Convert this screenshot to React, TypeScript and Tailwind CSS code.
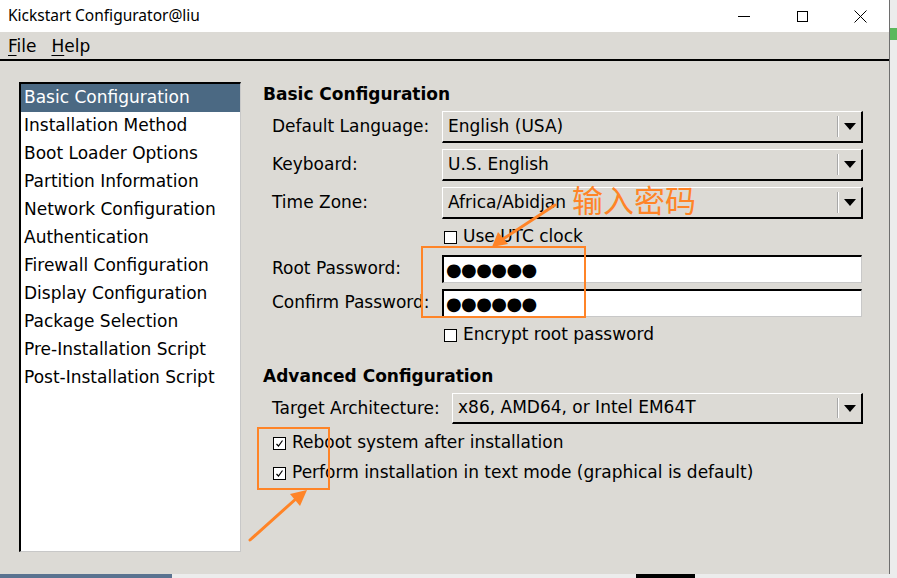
import React from "react";

const F = { fontFamily: '"DejaVu Sans", sans-serif' } as const;

function Combo({ value, w }: { value: string; w: string }) {
  return (
    <div className={`flex h-full items-center border-t border-l border-t-white border-l-white border-b-[2px] border-r-[2px] border-b-black border-r-black bg-[#dcdad5] ${w}`}>
      <span className="flex-1 pl-[5px] text-[17px] text-black">{value}</span>
      <div className="flex h-full items-center py-[4px]">
        <div className="h-full w-px bg-[#a8a8a8]" />
        <div className="h-full w-px bg-white" />
        <div className="flex w-[22px] items-center justify-center">
          <svg width="12" height="7" viewBox="0 0 12 7">
            <polygon points="0,0 12,0 6,7" fill="#000" />
          </svg>
        </div>
      </div>
    </div>
  );
}

function Check({ checked }: { checked?: boolean }) {
  return (
    <div className="flex h-[13px] w-[13px] items-center justify-center border border-black bg-white">
      {checked && (
        <svg width="9" height="9" viewBox="0 0 9 9">
          <polyline points="1.5,5 3.5,7 7.5,1.5" fill="none" stroke="#000" strokeWidth="1.2" />
        </svg>
      )}
    </div>
  );
}

function Entry() {
  return (
    <div className="flex h-full w-[420px] items-center border-t-[2px] border-l-[2px] border-t-black border-l-black border-b border-r border-b-[#c8c8c8] border-r-[#c8c8c8] bg-white pl-[2px]">
      <span className="text-[18px] leading-none tracking-[-0.6px] text-black">●●●●●●</span>
    </div>
  );
}

const items = [
  "Basic Configuration",
  "Installation Method",
  "Boot Loader Options",
  "Partition Information",
  "Network Configuration",
  "Authentication",
  "Firewall Configuration",
  "Display Configuration",
  "Package Selection",
  "Pre-Installation Script",
  "Post-Installation Script",
];

export default function App() {
  return (
    <div className="relative h-[578px] w-[897px] overflow-hidden bg-[#ececec]" style={F}>
      <div className="flex">
        <div className="flex h-[574px] w-[890px] flex-col border-r border-r-[#6e6e6e] bg-[#dcdad5]">
          {/* Title bar */}
          <div className="flex h-[32px] items-center bg-white">
            <span className="flex-1 pl-[8px] text-[15.5px] text-black" style={{ fontFamily: '"Noto Sans", "Noto Sans CJK SC", sans-serif' }}>
              Kickstart Configurator@liu
            </span>
            <div className="flex h-full items-center">
              <div className="flex w-[58px] justify-center">
                <div className="h-px w-[12px] bg-black" />
              </div>
              <div className="flex w-[58px] justify-center">
                <div className="h-[11px] w-[11px] border border-black" />
              </div>
              <div className="flex w-[58px] justify-center">
                <svg width="13" height="13" viewBox="0 0 13 13">
                  <path d="M0.5 0.5 L12.5 12.5 M12.5 0.5 L0.5 12.5" stroke="#000" strokeWidth="1" />
                </svg>
              </div>
            </div>
          </div>
          {/* Menu bar */}
          <div className="flex h-[29px] items-center gap-[15px] border-b-[2px] border-b-black pl-[8px] pt-[2px] text-[17px] text-black">
            <span><span className="underline decoration-1 underline-offset-[3px]">F</span>ile</span>
            <span><span className="underline decoration-1 underline-offset-[3px]">H</span>elp</span>
          </div>
          {/* Body */}
          <div className="flex flex-1">
            <div className="ml-[19px] mt-[21px] h-[470px] w-[222px] border-t-[2px] border-l-[2px] border-t-black border-l-black border-b border-r border-b-[#c8c8c8] border-r-[#c8c8c8] bg-white">
              {items.map((t, i) => (
                <div
                  key={t}
                  className={`flex h-[28px] items-center pl-[3px] text-[17px] ${i === 0 ? "bg-[#4b6983] text-white" : "text-black"}`}
                >
                  {t}
                </div>
              ))}
            </div>
            <div className="ml-[22px] flex flex-1 flex-col pt-[24px] text-[17px] text-black">
              <div className="flex h-[20px] items-center font-bold">Basic Configuration</div>
              <div className="mt-[6px] flex h-[32px] items-center">
                <span className="w-[179px] pl-[9px]">Default Language:</span>
                <Combo value="English (USA)" w="w-[421px]" />
              </div>
              <div className="mt-[6px] flex h-[32px] items-center">
                <span className="w-[179px] pl-[9px]">Keyboard:</span>
                <Combo value="U.S. English" w="w-[421px]" />
              </div>
              <div className="mt-[6px] flex h-[32px] items-center">
                <span className="w-[179px] pl-[9px]">Time Zone:</span>
                <Combo value="Africa/Abidjan" w="w-[421px]" />
              </div>
              <div className="mt-[9px] flex h-[18px] items-center gap-[6px] pl-[181px]">
                <Check />
                <span>Use UTC clock</span>
              </div>
              <div className="mt-[9px] flex h-[28px] items-center">
                <span className="w-[179px] pl-[9px]">Root Password:</span>
                <Entry />
              </div>
              <div className="mt-[6px] flex h-[28px] items-center">
                <span className="w-[179px] pl-[9px]">Confirm Password:</span>
                <Entry />
              </div>
              <div className="mt-[9px] flex h-[18px] items-center gap-[6px] pl-[181px]">
                <Check />
                <span>Encrypt root password</span>
              </div>
              <div className="mt-[23px] flex h-[20px] items-center font-bold">Advanced Configuration</div>
              <div className="mt-[6px] flex h-[31px] items-center">
                <span className="w-[189px] pl-[9px]">Target Architecture:</span>
                <Combo value="x86, AMD64, or Intel EM64T" w="w-[411px]" />
              </div>
              <div className="mt-[10px] flex h-[18px] items-center gap-[6px] pl-[10px]">
                <Check checked />
                <span>Reboot system after installation</span>
              </div>
              <div className="mt-[12px] flex h-[18px] items-center gap-[6px] pl-[10px]">
                <Check checked />
                <span>Perform installation in text mode (graphical is default)</span>
              </div>
            </div>
          </div>
        </div>
        <div className="flex flex-1 flex-col">
          <div className="mt-[28px] h-[12px] w-full bg-[#5cb85c]" />
        </div>
      </div>
      {/* taskbar remnants */}
      <div className="flex h-[4px]">
        <div className="h-full w-[172px] bg-[#5a7390]" />
        <div className="ml-[464px] h-full w-[59px] bg-black" />
      </div>

      {/* Annotations */}
      <div
        className="absolute left-[572px] top-[183px] text-[31px] leading-none text-[#ff8427]"
        style={{ fontFamily: '"Noto Sans CJK SC", sans-serif' }}
      >
        输入密码
      </div>
      <div className="absolute left-[421px] top-[246px] h-[72px] w-[165px] border-[2.5px] border-[#ff8427]" />
      <div className="absolute left-[257px] top-[427px] h-[63px] w-[73px] border-[2.5px] border-[#ff8427]" />
      <svg className="absolute left-0 top-0" width="897" height="578" viewBox="0 0 897 578">
        <line x1="555" y1="205" x2="500" y2="241" stroke="#ff8427" strokeWidth="3" strokeLinecap="round" />
        <polygon points="492,247 498,232 508,244" fill="#ff8427" />
        <line x1="250" y1="540" x2="298" y2="497" stroke="#ff8427" strokeWidth="3" strokeLinecap="round" />
        <polygon points="307,490 300,506 290,494" fill="#ff8427" />
      </svg>
    </div>
  );
}
